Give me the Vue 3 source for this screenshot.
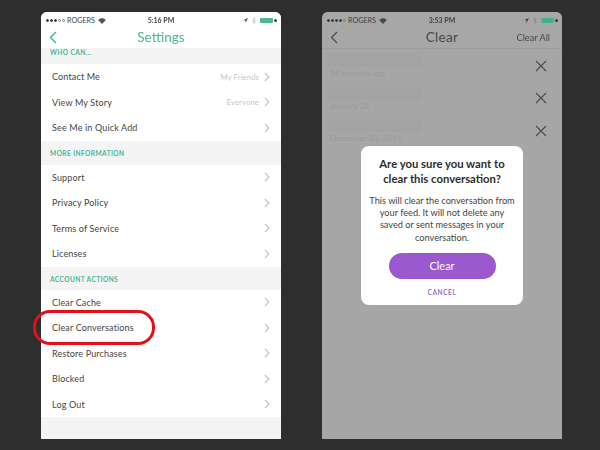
<script setup>
const sections = [
  { title: 'WHO CAN...', cls: 'first', rows: [
    { label: 'Contact Me', value: 'My Friends' },
    { label: 'View My Story', value: 'Everyone' },
    { label: 'See Me in Quick Add' }
  ]},
  { title: 'MORE INFORMATION', rows: [
    { label: 'Support' }, { label: 'Privacy Policy' }, { label: 'Terms of Service' }, { label: 'Licenses' }
  ]},
  { title: 'ACCOUNT ACTIONS', cls: 'tight', rows: [
    { label: 'Clear Cache' }, { label: 'Clear Conversations', ring: true }, { label: 'Restore Purchases' }, { label: 'Blocked' }, { label: 'Log Out' }
  ]}
]
const convs = ['14 minutes ago', 'January 24', 'December 23, 2016']
</script>

<template>
  <div class="stage">
    <section class="phone">
      <div class="status">
        <span class="dots"><i class="on"></i><i class="on"></i><i class="on"></i><i></i><i></i></span>
        <span class="carrier">ROGERS</span>
        <svg class="wifi" width="8" height="6" viewBox="0 0 9 7"><path d="M0 2.2C2.6-.3 6.4-.3 9 2.2L4.5 7z" fill="#555"/></svg>
        <span class="time">5:16 PM</span>
        <span class="right">
          <svg width="5" height="5" viewBox="0 0 5 5"><path d="M5 0 0 2.2h2.4V5z" fill="#444"/></svg>
          <svg width="4" height="7" viewBox="0 0 4 7"><path d="M.3 1.8 3.4 5 2 6.5V.5L3.4 2 .3 5.2" fill="none" stroke="#bbb" stroke-width=".7"/></svg>
          <span class="batt green"></span><span class="nub"></span>
        </span>
      </div>
      <header class="nav">
        <svg class="back" width="8" height="13" viewBox="0 0 8 13"><path d="M7 1 1.5 6.5 7 12" fill="none" stroke="#4db598" stroke-width="1.5"/></svg>
        <h1 class="title green-text">Settings</h1>
      </header>
      <div class="list">
        <template v-for="s in sections" :key="s.title">
          <div class="head" :class="s.cls">{{ s.title }}</div>
          <div v-for="r in s.rows" :key="r.label" class="row">
            <span>{{ r.label }}</span>
            <em v-if="r.value">{{ r.value }}</em>
            <svg width="6" height="10" viewBox="0 0 6 10"><path d="M1 1l4 4-4 4" fill="none" stroke="#c2c2c2" stroke-width="1.1"/></svg>
            <b v-if="r.ring" class="ring"></b>
          </div>
        </template>
      </div>
    </section>

    <section class="phone dim">
      <div class="status">
        <span class="dots"><i class="on"></i><i class="on"></i><i class="on"></i><i class="on"></i><i></i></span>
        <span class="carrier">ROGERS</span>
        <svg class="wifi" width="8" height="6" viewBox="0 0 9 7"><path d="M0 2.2C2.6-.3 6.4-.3 9 2.2L4.5 7z" fill="#4a4a4a"/></svg>
        <span class="time">3:53 PM</span>
        <span class="right">
          <svg width="5" height="5" viewBox="0 0 5 5"><path d="M5 0 0 2.2h2.4V5z" fill="#3d3d3d"/></svg>
          <svg width="4" height="7" viewBox="0 0 4 7"><path d="M.3 1.8 3.4 5 2 6.5V.5L3.4 2 .3 5.2" fill="none" stroke="#8a8a8a" stroke-width=".7"/></svg>
          <span class="batt teal"></span><span class="nub"></span>
        </span>
      </div>
      <header class="nav line">
        <svg class="back" width="8" height="13" viewBox="0 0 8 13"><path d="M7 1 1.5 6.5 7 12" fill="none" stroke="#484848" stroke-width="1.2"/></svg>
        <h1 class="title">Clear</h1>
        <span class="all">Clear All</span>
      </header>
      <div class="convs">
        <div v-for="c in convs" :key="c" class="conv">
          <div class="who"><span class="bar"></span><span class="date">{{ c }}</span></div>
          <svg width="12" height="12" viewBox="0 0 12 12"><path d="M1 1l10 10M11 1 1 11" stroke="#4a4a4a" stroke-width="1.1"/></svg>
        </div>
      </div>
      <div class="dialog">
        <h2>Are you sure you want to clear this conversation?</h2>
        <p>This will clear the conversation from your feed. It will not delete any saved or sent messages in your conversation.</p>
        <button class="clear">Clear</button>
        <span class="cancel">CANCEL</span>
      </div>
    </section>
  </div>
</template>

<style>
body { margin: 0; }
</style>

<style scoped>
.stage {
  width: 600px; height: 450px; box-sizing: border-box; overflow: hidden;
  background: #2e2e2e;
  padding: 12px 38px 11px 41px;
  display: flex; gap: 41px;
  font-family: Lato, "Liberation Sans", sans-serif;
}
.phone {
  width: 240px; height: 427px; background: #f4f4f4; border-radius: 6px 6px 0 0;
  position: relative; display: flex; flex-direction: column;
  filter: blur(.35px);
}
.status {
  height: 13px; background: #fff; display: flex; align-items: center; padding: 2px 4px 0 5px;
  box-sizing: content-box; font-size: 7px; color: #444; position: relative;
  border-radius: 6px 6px 0 0;
}
.dots { display: flex; gap: 1px; }
.dots i { width: 3px; height: 3px; border-radius: 50%; box-sizing: border-box; border: .5px solid #777; }
.dots i.on { background: #333; border-color: #333; }
.carrier { margin-left: 2px; font-size: 7.2px; }
.wifi { margin-left: 3px; }
.time { position: absolute; left: 0; right: 0; top: 4px; text-align: center; font-weight: 700; font-size: 7px; line-height: 9px; }
.right { margin-left: auto; display: flex; align-items: center; gap: 4px; }
.batt { width: 13px; height: 5px; border-radius: 1px; }
.batt.green { background: #4db598; }
.batt.teal { background: #41b08e; border-radius: 2px; }
.nub { width: 3px; height: 3px; margin-left: -3px; border-radius: 50%; background: #444; }
.nav { height: 21px; background: #fff; position: relative; display: flex; align-items: center; justify-content: center; flex: none; }
.back { position: absolute; left: 8px; top: 4px; }
.title { margin: 0; font-size: 13.5px; font-weight: 400; line-height: 21px; color: #4a4a4a; }
.title.green-text { color: #4db598; }
.list { flex: 1; }
.head {
  height: 24px; display: flex; align-items: center; padding-left: 9px; background: #f4f4f4;
  font-size: 6.6px; font-weight: 700; letter-spacing: .4px; color: #4db598;
}
.head.first { height: 16px; align-items: flex-start; }
.head.tight { height: 23px; padding-top: 1px; box-sizing: border-box; }
.row {
  height: 25.5px; background: #fff; display: flex; align-items: center; padding: 0 11px;
  font-size: 9px; color: #444; position: relative; box-sizing: border-box;
  letter-spacing: .15px;
}
.row span { flex: 1; }
.row em { font-style: normal; font-size: 7.6px; color: #c4c4c4; margin-right: 5px; }
.ring {
  position: absolute; left: -8px; top: -5px; width: 122px; height: 35px; box-sizing: border-box;
  border: 3px solid #e0101c; border-radius: 17px; z-index: 2;
}
.dim { background: #a6a6a6; }
.dim .status, .dim .nav { background: #a7a7a7; color: #3d3d3d; }
.dim .nav.line { border-bottom: 1px solid #9d9d9d; height: 21px; }
.dim .title { font-size: 13.5px; letter-spacing: .3px; }
.all { position: absolute; right: 12px; top: 4px; font-size: 9.2px; line-height: 13px; color: #484848; }
.dim .nub { background: #3d3d3d; }
.convs { padding-top: 1px; }
.conv { height: 32.5px; display: flex; align-items: center; justify-content: space-between; padding: 0 15px 0 5px; box-sizing: border-box; }
.conv svg { margin-top: -1px; }
.who { display: flex; flex-direction: column; gap: 1px; }
.bar { width: 94px; height: 13px; background: #a3a3a3; display: block; }
.date { font-size: 8.2px; line-height: 10px; color: #9a9a9a; margin-left: 3px; }
.dialog {
  position: absolute; left: 39px; top: 134px; width: 162px; height: 159px; box-sizing: border-box;
  background: #fff; border-radius: 8px; padding: 10px 4px 0; text-align: center;
  display: flex; flex-direction: column; align-items: center;
}
h2 { margin: 0; font-size: 11.3px; font-weight: 700; line-height: 15px; color: #2c2c2c; width: 140px; }
p { margin: 9px 0 0; font-size: 9.2px; line-height: 12.2px; color: #444; width: 146px; }
.clear {
  margin-top: 9px; width: 107px; height: 26px; border: 0; border-radius: 13px;
  background: #9b59cf; color: #fff; font: 400 11px Lato, sans-serif; padding: 0;
}
.cancel { margin-top: 10px; font-size: 6.5px; font-weight: 700; letter-spacing: .6px; color: #9b6fc4; }
</style>
